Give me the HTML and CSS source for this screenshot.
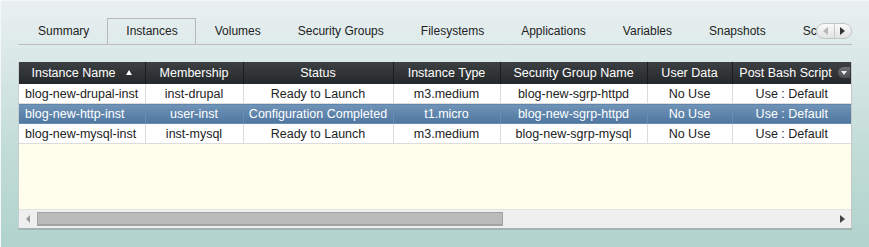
FILE: index.html
```html
<!DOCTYPE html>
<html lang="en">

<head>
	<meta charset="UTF-8" />
	<title>Instances</title>
	<link rel="stylesheet" href="styles.css">
</head>

<body>
	<div class="page">
		<div class="tabs">
			<div class="tab-strip">
				<span class="tab">Summary</span>
				<span class="tab active">Instances</span>
				<span class="tab">Volumes</span>
				<span class="tab">Security Groups</span>
				<span class="tab">Filesystems</span>
				<span class="tab">Applications</span>
				<span class="tab">Variables</span>
				<span class="tab">Snapshots</span>
				<span class="tab">Scripts</span>
			</div>
			<div class="tab-scroller">
				<span class="scroll-left"></span>
				<span class="scroll-right"></span>
			</div>
		</div>

		<div class="grid">
			<div class="grid-body">
				<table class="instances">
					<colgroup>
						<col style="width: 126px">
						<col style="width: 98px">
						<col style="width: 150px">
						<col style="width: 107px">
						<col style="width: 147px">
						<col style="width: 85px">
						<col style="width: 119px">
					</colgroup>
					<thead>
						<tr>
							<th>Instance Name <span class="sort-asc"></span></th>
							<th>Membership</th>
							<th>Status</th>
							<th>Instance Type</th>
							<th>Security Group Name</th>
							<th>User Data</th>
							<th class="has-menu">Post Bash Script <span class="col-menu"></span></th>
						</tr>
					</thead>
					<tbody>
						<tr>
							<td class="name">blog-new-drupal-inst</td>
							<td>inst-drupal</td>
							<td>Ready to Launch</td>
							<td>m3.medium</td>
							<td>blog-new-sgrp-httpd</td>
							<td>No Use</td>
							<td>Use : Default</td>
						</tr>
						<tr class="selected">
							<td class="name">blog-new-http-inst</td>
							<td>user-inst</td>
							<td>Configuration Completed</td>
							<td>t1.micro</td>
							<td>blog-new-sgrp-httpd</td>
							<td>No Use</td>
							<td>Use : Default</td>
						</tr>
						<tr>
							<td class="name">blog-new-mysql-inst</td>
							<td>inst-mysql</td>
							<td>Ready to Launch</td>
							<td>m3.medium</td>
							<td>blog-new-sgrp-mysql</td>
							<td>No Use</td>
							<td>Use : Default</td>
						</tr>
					</tbody>
				</table>
			</div>
			<div class="hscroll">
				<span class="arrow-left"></span>
				<div class="track">
					<div class="thumb"></div>
				</div>
				<span class="arrow-right"></span>
			</div>
		</div>
	</div>
</body>

</html>
```

FILE: styles.css
```css
html,
body {
	margin: 0;
	height: 100%;
}

body {
	font-family: "Liberation Sans", Arial, sans-serif;
	font-size: 12.5px;
	color: #222;
	background: linear-gradient(#eaf0f2 0%, #d6e6e5 30%, #c2dcd7 60%, #b1d3cd 100%);
	border-left: 1px solid #f4f8f8;
	border-top: 1px solid #f4f8f8;
	box-sizing: border-box;
	overflow: hidden;
}

.page {
	padding: 17px 0 0 17px;
	width: 834px;
}

/* tab bar */
.tabs {
	position: relative;
	height: 26px;
	border-bottom: 1px solid #bdbdbd;
	overflow: hidden;
}

.tab-strip {
	display: flex;
	padding-left: 1px;
	white-space: nowrap;
	font-size: 12px;
}

.tab {
	height: 25px;
	line-height: 24px;
	padding: 0 17px 0 18px;
	border: 1px solid transparent;
	border-bottom: none;
}

.tab.active {
	border-color: #b8b8b8;
	height: 26px;
}

.tab-scroller {
	position: absolute;
	right: 0;
	top: 5px;
	width: 34px;
	height: 14px;
	display: flex;
	border: 1px solid #c4c4c4;
	border-radius: 8px;
	background: linear-gradient(#fafafa, #e2e2e2);
}

.tab-scroller span {
	flex: 1;
	display: flex;
	align-items: center;
	justify-content: center;
}

.scroll-left {
	border-right: 1px solid #c8c8c8;
}

.scroll-left::after {
	content: "";
	border: 4px solid transparent;
	border-right: 5px solid #b8b8b8;
	border-left: none;
}

.scroll-right::after {
	content: "";
	border: 4px solid transparent;
	border-left: 5px solid #333;
	border-right: none;
}

/* grid panel */
.grid {
	margin-top: 17px;
	border-left: 1px solid #c6cfcd;
	border-right: 1px solid #c6c6c6;
	box-shadow: 0 2px 0 #a3b5b0;
	background: #fefeec;
}

.grid-body {
	height: 147px;
	overflow: hidden;
}

.instances {
	table-layout: fixed;
	border-collapse: collapse;
	width: 832px;
}

.instances th {
	height: 22px;
	padding: 0;
	font-weight: normal;
	color: #fff;
	background: linear-gradient(#3c4043, #25282a);
	border-left: 1px solid #505457;
	border-right: 1px solid #1a1c1d;
	white-space: nowrap;
}

.instances th:first-child {
	border-left: none;
}

.sort-asc {
	display: inline-block;
	margin-left: 7px;
	vertical-align: 2px;
	border: 3px solid transparent;
	border-bottom: 5px solid #fff;
	border-top: none;
}

.has-menu {
	position: relative;
}

.instances th.has-menu {
	padding-right: 12px;
}

.col-menu {
	position: absolute;
	right: 1px;
	top: 5px;
	width: 12px;
	height: 11px;
	border-radius: 6px 0 0 6px;
	background: linear-gradient(#6b6f72, #4a4e51);
}

.col-menu::after {
	content: "";
	position: absolute;
	left: 3px;
	top: 4px;
	border: 3px solid transparent;
	border-top: 4px solid #eee;
	border-bottom: none;
}

.instances td {
	height: 19px;
	padding: 0 4px;
	text-align: center;
	background: #fff;
	border: 1px solid #dcdcdc;
	border-top: none;
	white-space: nowrap;
	overflow: hidden;
}

.instances td.name {
	text-align: left;
	padding-left: 6px;
	border-left: none;
}

.instances td:last-child {
	border-right: none;
}

.instances tr.selected td {
	color: #fff;
	background: linear-gradient(#7194b7, #4e76a0);
	border-color: #6a8db0;
}

/* horizontal scrollbar */
.hscroll {
	display: flex;
	align-items: center;
	height: 18px;
	background: #efefef;
	border-top: 1px solid #e4e4e4;
}

.arrow-left,
.arrow-right {
	width: 18px;
	display: flex;
	justify-content: center;
}

.arrow-left::after {
	content: "";
	border: 4px solid transparent;
	border-right: 4px solid #9a9a9a;
	border-left: none;
}

.arrow-right::after {
	content: "";
	border: 4px solid transparent;
	border-left: 5px solid #444;
	border-right: none;
}

.track {
	flex: 1;
	height: 14px;
}

.thumb {
	width: 466px;
	background: #bbb;
	border: 1px solid #a2a2a2;
	border-bottom-width: 2px;
	box-sizing: border-box;
	height: 14px;
}
```
